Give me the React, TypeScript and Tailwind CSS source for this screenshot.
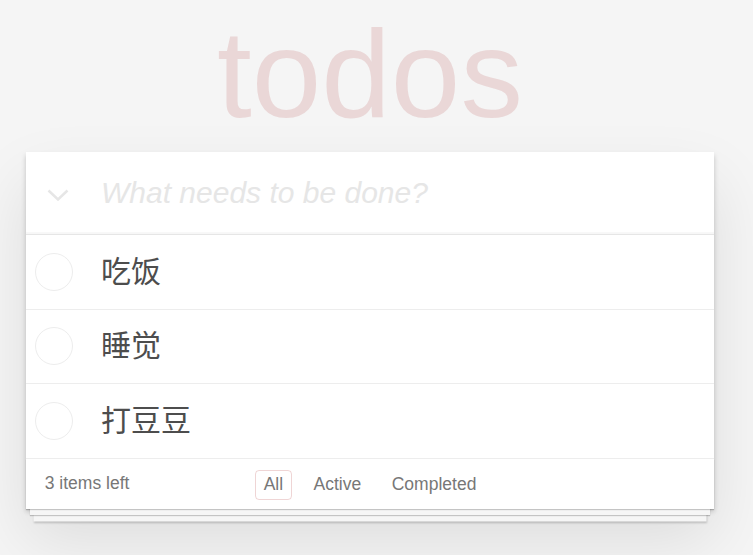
const todos = [
  { id: 1, title: "吃饭" },
  { id: 2, title: "睡觉" },
  { id: 3, title: "打豆豆" },
];

const filters = ["All", "Active", "Completed"];

function ToggleAll() {
  return (
    <svg width="22" height="12" viewBox="0 0 22 12" className="shrink-0">
      <polyline points="1.5,1.5 11,10.5 20.5,1.5" fill="none" stroke="#e6e6e6" strokeWidth="2.5" />
    </svg>
  );
}

function TodoItem({ title }: { title: string }) {
  return (
    <li className="flex items-center pl-[9px] border-b border-[#ededed]">
      <span className="w-[38px] h-[38px] rounded-full border border-[#ededed] shrink-0" />
      <label className="ml-[28px] py-[18.75px] text-[30px] leading-[36px] text-[#4d4d4d] font-['Liberation_Sans','Noto_Sans_CJK_SC',sans-serif]">
        {title}
      </label>
    </li>
  );
}

export default function App() {
  return (
    <div className="min-h-screen bg-[#f5f5f5] pb-10 font-['Liberation_Sans','Noto_Sans_CJK_SC',sans-serif] antialiased">
      <div className="w-[688px] ml-[26px]">
        <h1 className="pt-[11px] mb-[16px] text-center text-[125px] leading-none font-thin text-[rgba(175,47,47,0.15)]">
          todos
        </h1>

        <section className="bg-white shadow-[0_2.5px_5px_0_rgba(0,0,0,0.2),0_31px_62px_0_rgba(0,0,0,0.1)]">
          {/* header */}
          <header className="flex items-center h-[83px] border-b border-[#e6e6e6] shadow-[inset_0_-2px_1px_rgba(0,0,0,0.03)]">
            <div className="w-[75px] flex pl-[21px] pt-[3px]">
              <ToggleAll />
            </div>
            <div className="text-[30px] leading-[42px] italic text-[#e6e6e6]">
              What needs to be done?
            </div>
          </header>

          <ul>
            {todos.map((t) => (
              <TodoItem key={t.id} title={t.title} />
            ))}
          </ul>

          {/* footer */}
          <footer className="grid grid-cols-[1fr_auto_1fr] items-center h-[50px] px-[18.75px] text-[17.5px] leading-[25px] text-[#777] bg-white shadow-[0_1px_1px_rgba(0,0,0,0.2),0_10px_0_-4px_#f6f6f6,0_11px_1px_-4px_rgba(0,0,0,0.2),0_20px_0_-7.5px_#f6f6f6,0_21px_2px_-7.5px_rgba(0,0,0,0.2)]">
            <span>3 items left</span>
            <ul className="flex items-center gap-[12.5px] pt-[2px]">
              {filters.map((f, i) => (
                <li key={f}>
                  <a
                    className={
                      i === 0
                        ? "flex items-center h-[30px] px-[8px] rounded-[4px] border border-[rgba(175,47,47,0.2)]"
                        : "flex items-center h-[30px] px-[8px] rounded-[4px] border border-transparent"
                    }
                  >
                    {f}
                  </a>
                </li>
              ))}
            </ul>
            <span />
          </footer>
        </section>
      </div>
    </div>
  );
}
